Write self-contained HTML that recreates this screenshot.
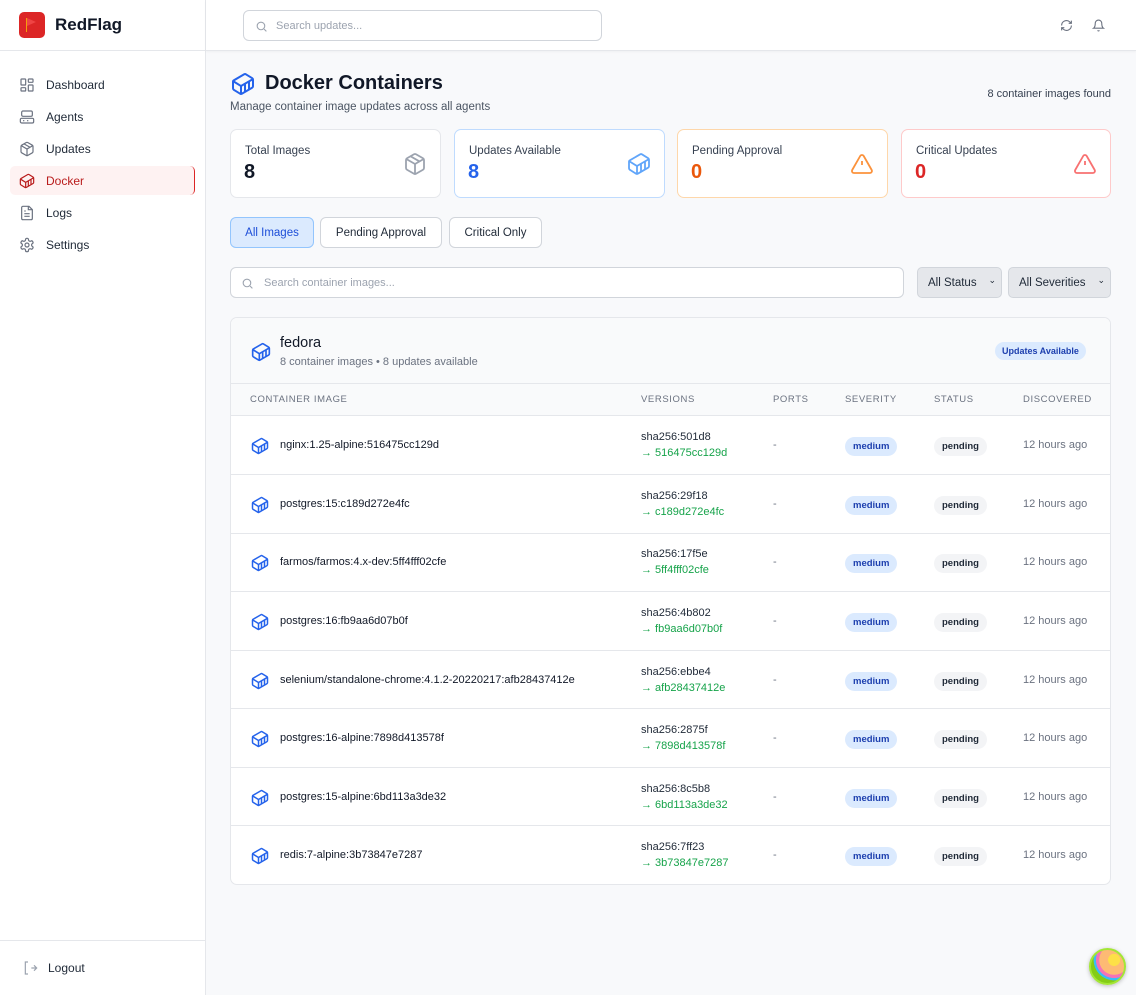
<!DOCTYPE html>
<html><head><meta charset="utf-8"><style>
*{box-sizing:border-box;margin:0;padding:0}
body{width:1136px;height:995px;overflow:hidden;background:#f8f9fb;font-family:"Liberation Sans",Arial,sans-serif;color:#111827;position:relative}
.abs{position:absolute}
svg{display:block}
.side{left:0;top:0;width:206px;height:995px;background:#fff;border-right:1px solid #e5e7eb}
.nav{position:absolute;left:10px;width:185px;height:29px;display:flex;align-items:center;padding-left:9px;font-size:12px;color:#1f2937}
.nav svg{margin-right:11px}
.card{position:absolute;top:129px;width:211px;height:69px;background:#fff;border:1px solid #e5e7eb;border-radius:7px}
.card .l{position:absolute;left:14px;top:15px;font-size:11.5px;color:#374151}
.card .v{position:absolute;left:13px;top:31px;font-size:20px;font-weight:bold}
.card svg{position:absolute;right:13px;top:22px}
.btn{position:absolute;top:217px;height:31px;border:1px solid #d1d5db;border-radius:6px;background:#fff;font-size:11.5px;color:#1f2937;display:flex;align-items:center;justify-content:center}
.th{position:absolute;top:394px;font-size:9.5px;letter-spacing:.6px;color:#6b7280}
.row{position:absolute;left:0;width:880px;height:59px;border-top:1px solid #e5e7eb}
.row div{position:absolute}
.pill{font-size:9.5px;font-weight:bold;border-radius:10px;padding:4px 8px}
</style></head><body>
<div class="abs side"></div>
<div class="abs" style="left:0;top:50px;width:206px;height:1px;background:#e5e7eb"></div>
<div class="abs" style="left:19px;top:12px;width:26px;height:26px;background:#dc2626;border-radius:5px"><div class="abs" style="left:7px;top:6px;width:1px;height:14px;background:#f59e0b"></div><div class="abs" style="left:8px;top:6px;width:0;height:0;border-left:9px solid #ef4444;border-top:4px solid transparent;border-bottom:4px solid transparent"></div></div>
<div class="abs" style="left:55px;top:15px;font-size:17px;font-weight:bold;color:#111827">RedFlag</div>

<div class="nav" style="top:70px"><svg width="16" height="16" viewBox="0 0 24 24" fill="none" stroke="#6b7280" stroke-width="1.8"><rect x="3" y="3" width="7" height="9" rx="1"/><rect x="14" y="3" width="7" height="5" rx="1"/><rect x="14" y="12" width="7" height="9" rx="1"/><rect x="3" y="16" width="7" height="5" rx="1"/></svg>Dashboard</div>
<div class="nav" style="top:102px"><svg width="16" height="16" viewBox="0 0 24 24" fill="none" stroke="#6b7280" stroke-width="1.8"><rect x="4" y="3" width="16" height="8" rx="2"/><rect x="2" y="14" width="20" height="7" rx="2"/><path d="M6 17.5h2M12 17.5h2"/></svg>Agents</div>
<div class="nav" style="top:134px"><svg width="16" height="16" viewBox="0 0 24 24" fill="none" stroke="#6b7280" stroke-width="1.8"><path d="M21 8a2 2 0 0 0-1-1.73l-7-4a2 2 0 0 0-2 0l-7 4A2 2 0 0 0 3 8v8a2 2 0 0 0 1 1.73l7 4a2 2 0 0 0 2 0l7-4A2 2 0 0 0 21 16Z"/><path d="m3.3 7 8.7 5 8.7-5M12 22V12M7.5 4.27l9 5.15"/></svg>Updates</div>
<div class="nav" style="top:166px;background:#fef2f2;border-right:1.5px solid #dc2626;border-radius:5px;color:#b91c1c"><svg width="16" height="16" viewBox="0 0 24 24" fill="none" stroke="#b91c1c" stroke-width="1.8"><path d="M22 7.7c0-.6-.4-1.2-.8-1.5l-6.3-3.9a1.72 1.72 0 0 0-1.7 0l-10.3 6c-.5.2-.9.8-.9 1.4v6.6c0 .5.4 1.2.8 1.5l6.3 3.9a1.72 1.72 0 0 0 1.7 0l10.3-6c.5-.3.9-1 .9-1.5Z"/><path d="M10 21.9V14L2.1 9.1M10 14l11.9-6.9M14 19.8v-8.1M18 17.5V9.4"/></svg>Docker</div>
<div class="nav" style="top:198px"><svg width="16" height="16" viewBox="0 0 24 24" fill="none" stroke="#6b7280" stroke-width="1.8"><path d="M15 2H6a2 2 0 0 0-2 2v16a2 2 0 0 0 2 2h12a2 2 0 0 0 2-2V7Z"/><path d="M14 2v5h6M8 13h8M8 17h8M8 9h2"/></svg>Logs</div>
<div class="nav" style="top:230px"><svg width="16" height="16" viewBox="0 0 24 24" fill="none" stroke="#6b7280" stroke-width="1.8"><circle cx="12" cy="12" r="3"/><path d="M12.22 2h-.44a2 2 0 0 0-2 2v.18a2 2 0 0 1-1 1.73l-.43.25a2 2 0 0 1-2 0l-.15-.08a2 2 0 0 0-2.73.73l-.22.38a2 2 0 0 0 .73 2.73l.15.1a2 2 0 0 1 1 1.72v.51a2 2 0 0 1-1 1.74l-.15.09a2 2 0 0 0-.73 2.73l.22.38a2 2 0 0 0 2.73.73l.15-.08a2 2 0 0 1 2 0l.43.25a2 2 0 0 1 1 1.73V20a2 2 0 0 0 2 2h.44a2 2 0 0 0 2-2v-.18a2 2 0 0 1 1-1.73l.43-.25a2 2 0 0 1 2 0l.15.08a2 2 0 0 0 2.73-.73l.22-.39a2 2 0 0 0-.73-2.73l-.15-.08a2 2 0 0 1-1-1.74v-.5a2 2 0 0 1 1-1.74l.15-.09a2 2 0 0 0 .73-2.73l-.22-.38a2 2 0 0 0-2.73-.73l-.15.08a2 2 0 0 1-2 0l-.43-.25a2 2 0 0 1-1-1.73V4a2 2 0 0 0-2-2z"/></svg>Settings</div>

<div class="abs" style="left:0;top:940px;width:206px;height:1px;background:#e5e7eb"></div>
<div class="abs" style="left:22px;top:960px;display:flex;align-items:center;font-size:12px;color:#1f2937"><svg width="16" height="16" viewBox="0 0 24 24" fill="none" stroke="#9ca3af" stroke-width="1.8" style="margin-right:10px"><path d="M9 3H5v18h4M14 12h7M18 8l4 4-4 4"/></svg>Logout</div>

<!-- topbar -->
<div class="abs" style="left:206px;top:0;width:930px;height:51px;background:#fff;border-bottom:1px solid #e5e7eb;box-shadow:0 1px 2px rgba(0,0,0,.04)"></div>
<div class="abs" style="left:243px;top:10px;width:359px;height:31px;border:1px solid #d1d5db;border-radius:6px;background:#fff"><svg class="abs" style="left:11px;top:9px" width="13" height="13" viewBox="0 0 24 24" fill="none" stroke="#9ca3af" stroke-width="2"><circle cx="11" cy="11" r="7"/><path d="m21 21-4.3-4.3"/></svg><div class="abs" style="left:32px;top:9px;font-size:11px;color:#9ca3af">Search updates...</div></div>
<svg class="abs" style="left:1060px;top:19px" width="13" height="13" viewBox="0 0 24 24" fill="none" stroke="#6b7280" stroke-width="2"><path d="M3 12a9 9 0 0 1 15-6.7L21 8M21 3v5h-5M21 12a9 9 0 0 1-15 6.7L3 16M3 21v-5h5"/></svg>
<svg class="abs" style="left:1092px;top:19px" width="13" height="13" viewBox="0 0 24 24" fill="none" stroke="#6b7280" stroke-width="2"><path d="M6 8a6 6 0 0 1 12 0c0 7 3 9 3 9H3s3-2 3-9M10.3 21a1.94 1.94 0 0 0 3.4 0"/></svg>

<!-- header -->
<svg class="abs" style="left:231px;top:72px" width="24" height="24" viewBox="0 0 24 24" fill="none" stroke="#2563eb" stroke-width="2"><path d="M22 7.7c0-.6-.4-1.2-.8-1.5l-6.3-3.9a1.72 1.72 0 0 0-1.7 0l-10.3 6c-.5.2-.9.8-.9 1.4v6.6c0 .5.4 1.2.8 1.5l6.3 3.9a1.72 1.72 0 0 0 1.7 0l10.3-6c.5-.3.9-1 .9-1.5Z"/><path d="M10 21.9V14L2.1 9.1M10 14l11.9-6.9M14 19.8v-8.1M18 17.5V9.4"/></svg>
<div class="abs" style="left:265px;top:72px;font-size:20px;font-weight:bold">Docker Containers</div>
<div class="abs" style="left:230px;top:101px;font-size:11.5px;color:#4b5563">Manage container image updates across all agents</div>
<div class="abs" style="right:25px;top:88px;font-size:11px;color:#374151">8 container images found</div>

<div class="card" style="left:230px"><div class="l">Total Images</div><div class="v">8</div><svg width="24" height="24" viewBox="0 0 24 24" fill="none" stroke="#9ca3af" stroke-width="1.8"><path d="M21 8a2 2 0 0 0-1-1.73l-7-4a2 2 0 0 0-2 0l-7 4A2 2 0 0 0 3 8v8a2 2 0 0 0 1 1.73l7 4a2 2 0 0 0 2 0l7-4A2 2 0 0 0 21 16Z"/><path d="m3.3 7 8.7 5 8.7-5M12 22V12M7.5 4.27l9 5.15"/></svg></div>
<div class="card" style="left:454px;border-color:#bfdbfe"><div class="l">Updates Available</div><div class="v" style="color:#2563eb">8</div><svg width="24" height="24" viewBox="0 0 24 24" fill="none" stroke="#60a5fa" stroke-width="1.8"><path d="M22 7.7c0-.6-.4-1.2-.8-1.5l-6.3-3.9a1.72 1.72 0 0 0-1.7 0l-10.3 6c-.5.2-.9.8-.9 1.4v6.6c0 .5.4 1.2.8 1.5l6.3 3.9a1.72 1.72 0 0 0 1.7 0l10.3-6c.5-.3.9-1 .9-1.5Z"/><path d="M10 21.9V14L2.1 9.1M10 14l11.9-6.9M14 19.8v-8.1M18 17.5V9.4"/></svg></div>
<div class="card" style="left:677px;border-color:#fed7aa"><div class="l">Pending Approval</div><div class="v" style="color:#ea580c">0</div><svg width="24" height="24" viewBox="0 0 24 24" fill="none" stroke="#fb923c" stroke-width="1.8"><path d="m21.7 18-8-14a2 2 0 0 0-3.5 0l-8 14A2 2 0 0 0 4 21h16a2 2 0 0 0 1.7-3Z"/><path d="M12 9v4M12 17h.01"/></svg></div>
<div class="card" style="left:901px;width:210px;border-color:#fecaca"><div class="l">Critical Updates</div><div class="v" style="color:#dc2626">0</div><svg width="24" height="24" viewBox="0 0 24 24" fill="none" stroke="#f87171" stroke-width="1.8"><path d="m21.7 18-8-14a2 2 0 0 0-3.5 0l-8 14A2 2 0 0 0 4 21h16a2 2 0 0 0 1.7-3Z"/><path d="M12 9v4M12 17h.01"/></svg></div>

<div class="btn" style="left:230px;width:84px;background:#dbeafe;border-color:#93c5fd;color:#1d4ed8">All Images</div>
<div class="btn" style="left:320px;width:122px">Pending Approval</div>
<div class="btn" style="left:449px;width:93px">Critical Only</div>

<div class="abs" style="left:230px;top:267px;width:674px;height:31px;border:1px solid #d1d5db;border-radius:6px;background:#fff"><svg class="abs" style="left:10px;top:9px" width="13" height="13" viewBox="0 0 24 24" fill="none" stroke="#9ca3af" stroke-width="2"><circle cx="11" cy="11" r="7"/><path d="m21 21-4.3-4.3"/></svg><div class="abs" style="left:33px;top:9px;font-size:11px;color:#9ca3af">Search container images...</div></div>
<div class="abs" style="left:917px;top:267px;width:85px;height:31px;border:1px solid #d1d5db;border-radius:5px;background:#e5e7eb;font-size:11.5px;color:#1f2937;padding:9px 0 0 10px">All Status<span class="abs" style="right:5px;top:7px;font-size:9px">⌄</span></div>
<div class="abs" style="left:1008px;top:267px;width:103px;height:31px;border:1px solid #d1d5db;border-radius:5px;background:#e5e7eb;font-size:11.5px;color:#1f2937;padding:9px 0 0 10px">All Severities<span class="abs" style="right:5px;top:7px;font-size:9px">⌄</span></div>

<!-- table card -->
<div class="abs" style="left:230px;top:317px;width:881px;height:568px;background:#fff;border:1px solid #e5e7eb;border-radius:7px;overflow:hidden">
<div class="abs" style="left:0;top:0;width:881px;height:98px;background:#f9fafb;border-bottom:1px solid #e5e7eb"></div>
<svg class="abs" style="left:20px;top:24px" width="20" height="20" viewBox="0 0 24 24" fill="none" stroke="#2563eb" stroke-width="2"><path d="M22 7.7c0-.6-.4-1.2-.8-1.5l-6.3-3.9a1.72 1.72 0 0 0-1.7 0l-10.3 6c-.5.2-.9.8-.9 1.4v6.6c0 .5.4 1.2.8 1.5l6.3 3.9a1.72 1.72 0 0 0 1.7 0l10.3-6c.5-.3.9-1 .9-1.5Z"/><path d="M10 21.9V14L2.1 9.1M10 14l11.9-6.9M14 19.8v-8.1M18 17.5V9.4"/></svg>
<div class="abs" style="left:49px;top:17px;font-size:14.5px;color:#111827">fedora</div>
<div class="abs" style="left:49px;top:38px;font-size:11px;color:#6b7280">8 container images • 8 updates available</div>
<div class="abs pill" style="left:764px;top:24px;background:#dbeafe;color:#1e40af;font-size:9px;padding:4px 7px">Updates Available</div>
<div class="abs" style="left:0;top:65px;width:881px;height:1px;background:#e5e7eb"></div>
</div>
<div class="th" style="left:250px">CONTAINER IMAGE</div>
<div class="th" style="left:641px">VERSIONS</div>
<div class="th" style="left:773px">PORTS</div>
<div class="th" style="left:845px">SEVERITY</div>
<div class="th" style="left:934px">STATUS</div>
<div class="th" style="left:1023px">DISCOVERED</div>

<div class="abs" style="left:231px;top:415px;width:879px;height:469px">
<!-- rows generated inline -->
<div class="row" style="top:0"><svg class="abs" style="left:20px;top:21px" width="18" height="18" viewBox="0 0 24 24" fill="none" stroke="#2563eb" stroke-width="2"><path d="M22 7.7c0-.6-.4-1.2-.8-1.5l-6.3-3.9a1.72 1.72 0 0 0-1.7 0l-10.3 6c-.5.2-.9.8-.9 1.4v6.6c0 .5.4 1.2.8 1.5l6.3 3.9a1.72 1.72 0 0 0 1.7 0l10.3-6c.5-.3.9-1 .9-1.5Z"/><path d="M10 21.9V14L2.1 9.1M10 14l11.9-6.9M14 19.8v-8.1M18 17.5V9.4"/></svg><div style="left:49px;top:23px;font-size:11px">nginx:1.25-alpine:516475cc129d</div><div style="left:410px;top:15px;font-size:11px;color:#1f2937">sha256:501d8</div><div style="left:410px;top:31px;font-size:11px;color:#16a34a">→ 516475cc129d</div><div style="left:542px;top:23px;font-size:11px;color:#6b7280">-</div><div class="pill" style="left:614px;top:21px;background:#dbeafe;color:#1e40af">medium</div><div class="pill" style="left:703px;top:21px;background:#f3f4f6;color:#1f2937">pending</div><div style="left:792px;top:23px;font-size:11px;color:#6b7280">12 hours ago</div></div>
<div class="row" style="top:59px"><svg class="abs" style="left:20px;top:21px" width="18" height="18" viewBox="0 0 24 24" fill="none" stroke="#2563eb" stroke-width="2"><path d="M22 7.7c0-.6-.4-1.2-.8-1.5l-6.3-3.9a1.72 1.72 0 0 0-1.7 0l-10.3 6c-.5.2-.9.8-.9 1.4v6.6c0 .5.4 1.2.8 1.5l6.3 3.9a1.72 1.72 0 0 0 1.7 0l10.3-6c.5-.3.9-1 .9-1.5Z"/><path d="M10 21.9V14L2.1 9.1M10 14l11.9-6.9M14 19.8v-8.1M18 17.5V9.4"/></svg><div style="left:49px;top:23px;font-size:11px">postgres:15:c189d272e4fc</div><div style="left:410px;top:15px;font-size:11px;color:#1f2937">sha256:29f18</div><div style="left:410px;top:31px;font-size:11px;color:#16a34a">→ c189d272e4fc</div><div style="left:542px;top:23px;font-size:11px;color:#6b7280">-</div><div class="pill" style="left:614px;top:21px;background:#dbeafe;color:#1e40af">medium</div><div class="pill" style="left:703px;top:21px;background:#f3f4f6;color:#1f2937">pending</div><div style="left:792px;top:23px;font-size:11px;color:#6b7280">12 hours ago</div></div>
<div class="row" style="top:118px"><svg class="abs" style="left:20px;top:20px" width="18" height="18" viewBox="0 0 24 24" fill="none" stroke="#2563eb" stroke-width="2"><path d="M22 7.7c0-.6-.4-1.2-.8-1.5l-6.3-3.9a1.72 1.72 0 0 0-1.7 0l-10.3 6c-.5.2-.9.8-.9 1.4v6.6c0 .5.4 1.2.8 1.5l6.3 3.9a1.72 1.72 0 0 0 1.7 0l10.3-6c.5-.3.9-1 .9-1.5Z"/><path d="M10 21.9V14L2.1 9.1M10 14l11.9-6.9M14 19.8v-8.1M18 17.5V9.4"/></svg><div style="left:49px;top:22px;font-size:11px">farmos/farmos:4.x-dev:5ff4fff02cfe</div><div style="left:410px;top:14px;font-size:11px;color:#1f2937">sha256:17f5e</div><div style="left:410px;top:30px;font-size:11px;color:#16a34a">→ 5ff4fff02cfe</div><div style="left:542px;top:22px;font-size:11px;color:#6b7280">-</div><div class="pill" style="left:614px;top:20px;background:#dbeafe;color:#1e40af">medium</div><div class="pill" style="left:703px;top:20px;background:#f3f4f6;color:#1f2937">pending</div><div style="left:792px;top:22px;font-size:11px;color:#6b7280">12 hours ago</div></div>
<div class="row" style="top:176px"><svg class="abs" style="left:20px;top:21px" width="18" height="18" viewBox="0 0 24 24" fill="none" stroke="#2563eb" stroke-width="2"><path d="M22 7.7c0-.6-.4-1.2-.8-1.5l-6.3-3.9a1.72 1.72 0 0 0-1.7 0l-10.3 6c-.5.2-.9.8-.9 1.4v6.6c0 .5.4 1.2.8 1.5l6.3 3.9a1.72 1.72 0 0 0 1.7 0l10.3-6c.5-.3.9-1 .9-1.5Z"/><path d="M10 21.9V14L2.1 9.1M10 14l11.9-6.9M14 19.8v-8.1M18 17.5V9.4"/></svg><div style="left:49px;top:23px;font-size:11px">postgres:16:fb9aa6d07b0f</div><div style="left:410px;top:15px;font-size:11px;color:#1f2937">sha256:4b802</div><div style="left:410px;top:31px;font-size:11px;color:#16a34a">→ fb9aa6d07b0f</div><div style="left:542px;top:23px;font-size:11px;color:#6b7280">-</div><div class="pill" style="left:614px;top:21px;background:#dbeafe;color:#1e40af">medium</div><div class="pill" style="left:703px;top:21px;background:#f3f4f6;color:#1f2937">pending</div><div style="left:792px;top:23px;font-size:11px;color:#6b7280">12 hours ago</div></div>
<div class="row" style="top:235px"><svg class="abs" style="left:20px;top:21px" width="18" height="18" viewBox="0 0 24 24" fill="none" stroke="#2563eb" stroke-width="2"><path d="M22 7.7c0-.6-.4-1.2-.8-1.5l-6.3-3.9a1.72 1.72 0 0 0-1.7 0l-10.3 6c-.5.2-.9.8-.9 1.4v6.6c0 .5.4 1.2.8 1.5l6.3 3.9a1.72 1.72 0 0 0 1.7 0l10.3-6c.5-.3.9-1 .9-1.5Z"/><path d="M10 21.9V14L2.1 9.1M10 14l11.9-6.9M14 19.8v-8.1M18 17.5V9.4"/></svg><div style="left:49px;top:23px;font-size:11px">selenium/standalone-chrome:4.1.2-20220217:afb28437412e</div><div style="left:410px;top:15px;font-size:11px;color:#1f2937">sha256:ebbe4</div><div style="left:410px;top:31px;font-size:11px;color:#16a34a">→ afb28437412e</div><div style="left:542px;top:23px;font-size:11px;color:#6b7280">-</div><div class="pill" style="left:614px;top:21px;background:#dbeafe;color:#1e40af">medium</div><div class="pill" style="left:703px;top:21px;background:#f3f4f6;color:#1f2937">pending</div><div style="left:792px;top:23px;font-size:11px;color:#6b7280">12 hours ago</div></div>
<div class="row" style="top:293px"><svg class="abs" style="left:20px;top:21px" width="18" height="18" viewBox="0 0 24 24" fill="none" stroke="#2563eb" stroke-width="2"><path d="M22 7.7c0-.6-.4-1.2-.8-1.5l-6.3-3.9a1.72 1.72 0 0 0-1.7 0l-10.3 6c-.5.2-.9.8-.9 1.4v6.6c0 .5.4 1.2.8 1.5l6.3 3.9a1.72 1.72 0 0 0 1.7 0l10.3-6c.5-.3.9-1 .9-1.5Z"/><path d="M10 21.9V14L2.1 9.1M10 14l11.9-6.9M14 19.8v-8.1M18 17.5V9.4"/></svg><div style="left:49px;top:23px;font-size:11px">postgres:16-alpine:7898d413578f</div><div style="left:410px;top:15px;font-size:11px;color:#1f2937">sha256:2875f</div><div style="left:410px;top:31px;font-size:11px;color:#16a34a">→ 7898d413578f</div><div style="left:542px;top:23px;font-size:11px;color:#6b7280">-</div><div class="pill" style="left:614px;top:21px;background:#dbeafe;color:#1e40af">medium</div><div class="pill" style="left:703px;top:21px;background:#f3f4f6;color:#1f2937">pending</div><div style="left:792px;top:23px;font-size:11px;color:#6b7280">12 hours ago</div></div>
<div class="row" style="top:352px"><svg class="abs" style="left:20px;top:21px" width="18" height="18" viewBox="0 0 24 24" fill="none" stroke="#2563eb" stroke-width="2"><path d="M22 7.7c0-.6-.4-1.2-.8-1.5l-6.3-3.9a1.72 1.72 0 0 0-1.7 0l-10.3 6c-.5.2-.9.8-.9 1.4v6.6c0 .5.4 1.2.8 1.5l6.3 3.9a1.72 1.72 0 0 0 1.7 0l10.3-6c.5-.3.9-1 .9-1.5Z"/><path d="M10 21.9V14L2.1 9.1M10 14l11.9-6.9M14 19.8v-8.1M18 17.5V9.4"/></svg><div style="left:49px;top:23px;font-size:11px">postgres:15-alpine:6bd113a3de32</div><div style="left:410px;top:15px;font-size:11px;color:#1f2937">sha256:8c5b8</div><div style="left:410px;top:31px;font-size:11px;color:#16a34a">→ 6bd113a3de32</div><div style="left:542px;top:23px;font-size:11px;color:#6b7280">-</div><div class="pill" style="left:614px;top:21px;background:#dbeafe;color:#1e40af">medium</div><div class="pill" style="left:703px;top:21px;background:#f3f4f6;color:#1f2937">pending</div><div style="left:792px;top:23px;font-size:11px;color:#6b7280">12 hours ago</div></div>
<div class="row" style="top:410px"><svg class="abs" style="left:20px;top:21px" width="18" height="18" viewBox="0 0 24 24" fill="none" stroke="#2563eb" stroke-width="2"><path d="M22 7.7c0-.6-.4-1.2-.8-1.5l-6.3-3.9a1.72 1.72 0 0 0-1.7 0l-10.3 6c-.5.2-.9.8-.9 1.4v6.6c0 .5.4 1.2.8 1.5l6.3 3.9a1.72 1.72 0 0 0 1.7 0l10.3-6c.5-.3.9-1 .9-1.5Z"/><path d="M10 21.9V14L2.1 9.1M10 14l11.9-6.9M14 19.8v-8.1M18 17.5V9.4"/></svg><div style="left:49px;top:23px;font-size:11px">redis:7-alpine:3b73847e7287</div><div style="left:410px;top:15px;font-size:11px;color:#1f2937">sha256:7ff23</div><div style="left:410px;top:31px;font-size:11px;color:#16a34a">→ 3b73847e7287</div><div style="left:542px;top:23px;font-size:11px;color:#6b7280">-</div><div class="pill" style="left:614px;top:21px;background:#dbeafe;color:#1e40af">medium</div><div class="pill" style="left:703px;top:21px;background:#f3f4f6;color:#1f2937">pending</div><div style="left:792px;top:23px;font-size:11px;color:#6b7280">12 hours ago</div></div>
</div>

<!-- avatar -->
<div class="abs" style="left:1089px;top:948px;width:37px;height:37px;border-radius:50%;background:radial-gradient(circle at 70% 30%,#fde047 0 18%,#fdba74 19% 45%,#f472b6 46% 55%,#38bdf8 56% 62%,#84cc16 63%);border:2px solid #a3e635;box-shadow:0 1px 4px rgba(0,0,0,.25)"></div>
</body></html>
